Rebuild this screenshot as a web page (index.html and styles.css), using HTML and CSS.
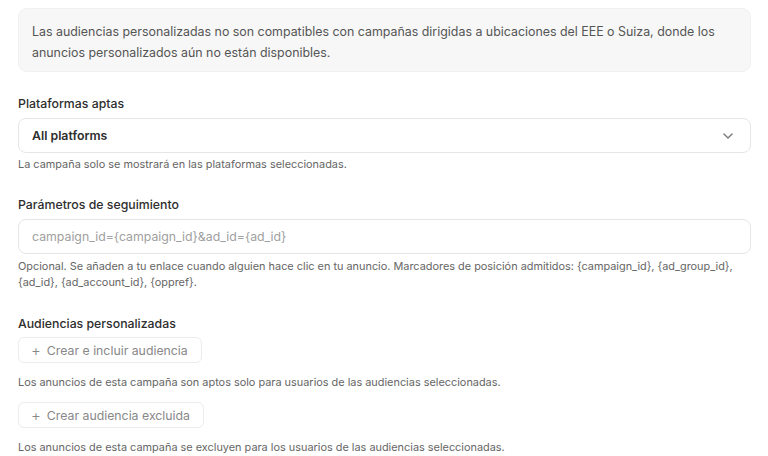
FILE: index.html
```html
<!DOCTYPE html>
<html lang="es">
<head>
<meta charset="utf-8">
<link rel="stylesheet" href="styles.css">
</head>
<body>
<div class="page">
  <div class="notice">Las audiencias personalizadas no son compatibles con campañas dirigidas a ubicaciones del EEE o Suiza, donde los anuncios personalizados aún no están disponibles.</div>

  <section class="field first">
    <div class="label">Plataformas aptas</div>
    <div class="select">
      <span class="select-value">All platforms</span>
      <svg class="chevron" width="10" height="6" viewBox="0 0 10 6"><path d="M1 1l4 4 4-4" fill="none" stroke="#777" stroke-width="1.4" stroke-linecap="round" stroke-linejoin="round"/></svg>
    </div>
    <div class="help">La campaña solo se mostrará en las plataformas seleccionadas.</div>
  </section>

  <section class="field tracking">
    <div class="label">Parámetros de seguimiento</div>
    <div class="input"><span class="placeholder">campaign_id={campaign_id}&amp;ad_id={ad_id}</span></div>
    <div class="help multi">Opcional. Se añaden a tu enlace cuando alguien hace clic en tu anuncio. Marcadores de posición admitidos: {campaign_id}, {ad_group_id}, {ad_id}, {ad_account_id}, {oppref}.</div>
  </section>

  <section class="field audiences">
    <div class="label">Audiencias personalizadas</div>
    <div class="btn"><span class="plus">+</span>Crear e incluir audiencia</div>
    <div class="help">Los anuncios de esta campaña son aptos solo para usuarios de las audiencias seleccionadas.</div>
    <div class="btn second"><span class="plus">+</span>Crear audiencia excluida</div>
    <div class="help">Los anuncios de esta campaña se excluyen para los usuarios de las audiencias seleccionadas.</div>
  </section>
</div>
</body>
</html>
```
FILE: styles.css
```css
* { box-sizing: border-box; }
html, body { margin: 0; padding: 0; background: #fff; }
body { font-family: Inter, "Noto Sans", sans-serif; color: #333; }
.page { width: 768px; height: 456px; padding: 8px 17px 0 18px; overflow: hidden; }

.notice {
  background: #f7f7f7;
  border: 1px solid #f0f0f0;
  border-radius: 9px;
  height: 64px;
  padding: 12px 30px 0 13px;
  font-size: 12.4px;
  line-height: 21px;
  color: #555;
}

.field { display: flex; flex-direction: column; }
.first { margin-top: 23px; }
.label { font-size: 12.3px; line-height: 18px; color: #2e2e2e; font-weight: 500; }

.select, .input {
  margin-top: 5px;
  height: 35px;
  border: 1px solid #e6e6e6;
  border-radius: 8px;
  display: flex;
  align-items: center;
  padding: 0 13px 0 13px;
}
.select { justify-content: space-between; }
.select-value { font-size: 12.3px; font-weight: 600; color: #2e2e2e; }
.chevron { margin-right: 4px; }
.placeholder { font-size: 12.3px; color: #a0a0a0; }

.help { font-size: 10.9px; line-height: 16px; color: #666; margin-top: 3px; }
.help.multi { margin-top: 4px; padding-right: 10px; }

.tracking { margin-top: 24px; }
.audiences { margin-top: 25px; }

.btn {
  align-self: flex-start;
  margin-top: 4px;
  height: 26px;
  padding: 0 13px 0 12px;
  border: 1px solid #ececec;
  border-radius: 6px;
  display: flex;
  align-items: center;
  font-size: 12.3px;
  color: #888;
}
.plus { font-size: 15px; margin-right: 6px; color: #888; font-weight: 300; }
.btn.second { margin-top: 12px; }
.audiences .help { margin-top: 11px; }
```
